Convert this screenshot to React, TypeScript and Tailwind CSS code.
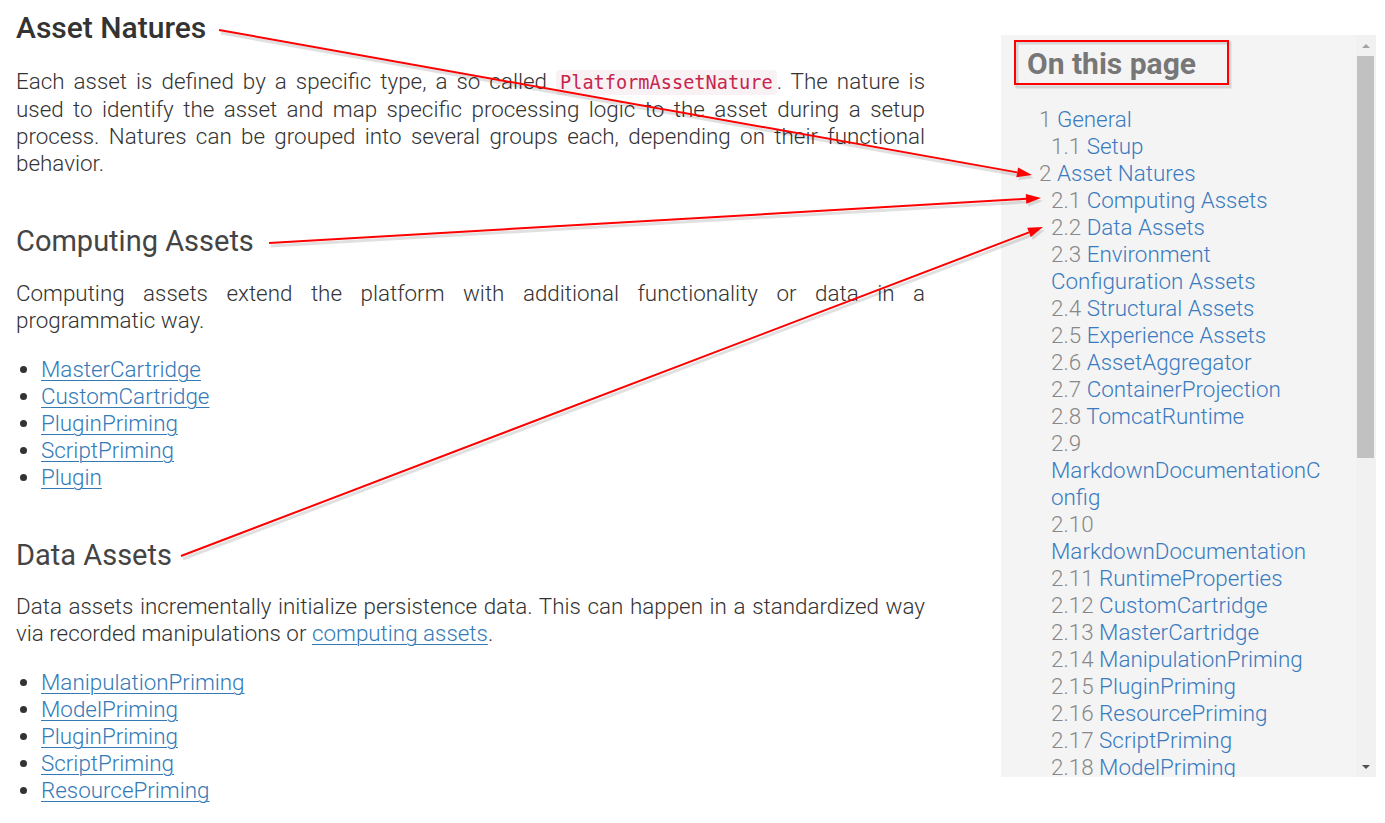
import React from 'react';

interface TocItem {
  num: string;
  title: string;
  children?: TocItem[];
}

const toc: TocItem[] = [
  { num: '1', title: 'General', children: [{ num: '1.1', title: 'Setup' }] },
  {
    num: '2',
    title: 'Asset Natures',
    children: [
      { num: '2.1', title: 'Computing Assets' },
      { num: '2.2', title: 'Data Assets' },
      { num: '2.3', title: 'Environment Configuration Assets' },
      { num: '2.4', title: 'Structural Assets' },
      { num: '2.5', title: 'Experience Assets' },
      { num: '2.6', title: 'AssetAggregator' },
      { num: '2.7', title: 'ContainerProjection' },
      { num: '2.8', title: 'TomcatRuntime' },
      { num: '2.9', title: 'MarkdownDocumentationConfig' },
      { num: '2.10', title: 'MarkdownDocumentation' },
      { num: '2.11', title: 'RuntimeProperties' },
      { num: '2.12', title: 'CustomCartridge' },
      { num: '2.13', title: 'MasterCartridge' },
      { num: '2.14', title: 'ManipulationPriming' },
      { num: '2.15', title: 'PluginPriming' },
      { num: '2.16', title: 'ResourcePriming' },
      { num: '2.17', title: 'ScriptPriming' },
      { num: '2.18', title: 'ModelPriming' },
      { num: '2.19', title: 'PluginPriming' },
    ],
  },
];

const computingLinks = ['MasterCartridge', 'CustomCartridge', 'PluginPriming', 'ScriptPriming', 'Plugin'];
const dataLinks = ['ManipulationPriming', 'ModelPriming', 'PluginPriming', 'ScriptPriming', 'ResourcePriming'];

// annotation arrows: [x1, y1, x2, y2]
const arrows: Array<[number, number, number, number]> = [
  [219, 30, 1032, 175],
  [269, 243, 1041, 198],
  [181, 556, 1043, 227],
];

const LinkList: React.FC<{ items: string[] }> = ({ items }) => (
  <ul className="list-disc pl-[25px] mt-[22px] marker:text-[#333]">
    {items.map((item, i) => (
      <li key={i}>
        <a href="#" className="text-[#337ab7] underline underline-offset-[3px] decoration-1">
          {item}
        </a>
      </li>
    ))}
  </ul>
);

const TocList: React.FC<{ items: TocItem[]; nested?: boolean }> = ({ items, nested }) => (
  <ul className="pl-[12px]">
    {items.map((item) => (
      <li key={item.num} className="break-words">
        <span className="text-[#888]">{item.num}</span>{' '}
        <a href="#" className="text-[#3a7bbf]">{item.title}</a>
        {item.children && !nested && <TocList items={item.children} nested />}
      </li>
    ))}
  </ul>
);

const Arrow: React.FC<{ a: [number, number, number, number] }> = ({ a }) => {
  const [x1, y1, x2, y2] = a;
  const len = Math.hypot(x2 - x1, y2 - y1);
  const ux = (x2 - x1) / len;
  const uy = (y2 - y1) / len;
  const hl = 15;
  const hw = 5;
  const bx = x2 - ux * hl;
  const by = y2 - uy * hl;
  const pts = `${x2},${y2} ${bx - uy * hw},${by + ux * hw} ${bx + uy * hw},${by - ux * hw}`;
  const sh = (p: string) =>
    p
      .split(' ')
      .map((q) => q.split(',').map(Number))
      .map(([x, y]) => `${x + 2},${y + 3}`)
      .join(' ');
  return (
    <g>
      <line x1={x1 + 2} y1={y1 + 3} x2={bx + 2} y2={by + 3} stroke="rgba(0,0,0,0.12)" strokeWidth={3} />
      <polygon points={sh(pts)} fill="rgba(0,0,0,0.12)" />
      <line x1={x1} y1={y1} x2={bx} y2={by} stroke="#ff0000" strokeWidth={2} />
      <polygon points={pts} fill="#ff0000" />
    </g>
  );
};

export default function App() {
  return (
    <div className="relative w-[1385px] h-[823px] overflow-hidden bg-white flex font-['Roboto',sans-serif]">
      {/* main content */}
      <div className="w-[925px] pl-[16px] shrink-0 text-[#333]">
        <h1 className="mt-[11px] text-[30px] leading-[34px] font-medium text-[#333]">Asset Natures</h1>
        <p className="mt-[23px] text-[22.4px] leading-[27px] font-light text-justify">
          Each asset is defined by a specific type, a so called{' '}
          <code className="font-['DejaVu_Sans_Mono',monospace] text-[18.6px] text-[#c7254e] bg-[#f9f2f4] rounded-[4px] px-[4px] py-[2px]">
            PlatformAssetNature
          </code>
          . The nature is used to identify the asset and map specific processing logic to the asset during a setup
          process. Natures can be grouped into several groups each, depending on their functional behavior.
        </p>

        <h2 className="mt-[47px] text-[29px] leading-[34px] font-normal text-[#444]">Computing Assets</h2>
        <p className="mt-[22px] text-[22.4px] leading-[27px] font-light text-justify">
          Computing assets extend the platform with additional functionality or data in a programmatic way.
        </p>
        <div className="text-[22.4px] leading-[27px] font-light">
          <LinkList items={computingLinks} />
        </div>

        <h2 className="mt-[47px] text-[29px] leading-[34px] font-normal text-[#444]">Data Assets</h2>
        <p className="mt-[21px] text-[22.4px] leading-[27px] font-light text-justify">
          Data assets incrementally initialize persistence data. This can happen in a standardized way via recorded
          manipulations or{' '}
          <a href="#" className="text-[#337ab7] underline underline-offset-[3px] decoration-1">
            computing assets
          </a>
          .
        </p>
        <div className="text-[22.4px] leading-[27px] font-light">
          <LinkList items={dataLinks} />
        </div>
      </div>

      {/* on this page sidebar */}
      <div className="ml-[76px] mt-[35px] w-[375px] h-[742px] bg-[#f4f4f4] flex shrink-0">
        <div className="flex-1 overflow-hidden pl-[26px] pr-[28px] pt-[11px]">
          <div className="text-[30px] leading-[36px] font-bold text-[#777]">On this page</div>
          <div className="mt-[24px] text-[22.4px] leading-[27px] font-light">
            <TocList items={toc} />
          </div>
        </div>
        <div className="w-[20px] bg-[#f1f1f1] flex flex-col items-center">
          <div className="h-[21px] flex items-center justify-center">
            <div className="w-0 h-0 border-l-[4px] border-r-[4px] border-b-[4px] border-l-transparent border-r-transparent border-b-[#a3a3a3]" />
          </div>
          <div className="w-[17px] h-[402px] bg-[#c1c1c1] mr-[1px]" />
          <div className="flex-1" />
          <div className="h-[21px] flex items-center justify-center">
            <div className="w-0 h-0 border-l-[4px] border-r-[4px] border-t-[4px] border-l-transparent border-r-transparent border-t-[#505050]" />
          </div>
        </div>
      </div>

      {/* annotations */}
      <svg className="absolute inset-0 pointer-events-none" width={1385} height={823}>
        <rect x={1017} y={43} width={213} height={44} fill="none" stroke="rgba(0,0,0,0.12)" strokeWidth={3} />
        <rect x={1015} y={41} width={213} height={43} fill="none" stroke="#ff0000" strokeWidth={2} />
        {arrows.map((a, i) => (
          <Arrow key={i} a={a} />
        ))}
      </svg>
    </div>
  );
}
